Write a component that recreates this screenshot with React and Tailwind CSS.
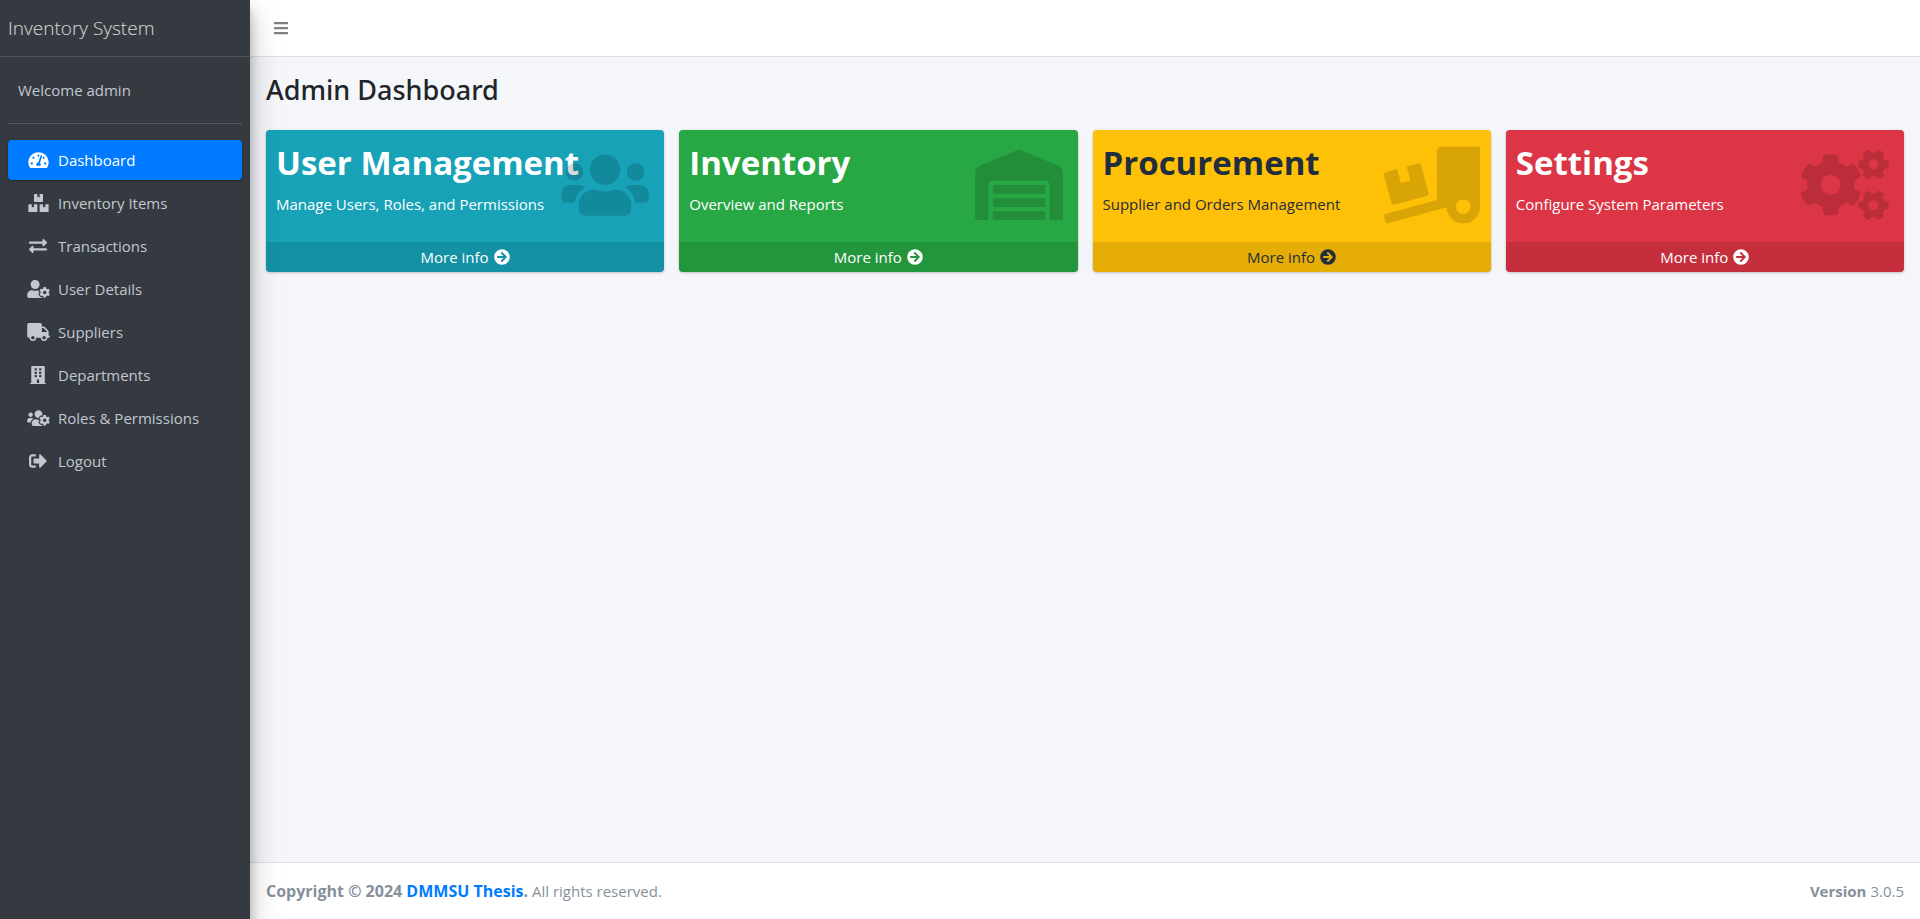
import {
  FaArrowCircleRight,
  FaBars,
  FaBoxes,
  FaBuilding,
  FaCogs,
  FaExchangeAlt,
  FaSignOutAlt,
  FaTachometerAlt,
  FaTruck,
  FaTruckLoading,
  FaUserCog,
  FaUsers,
  FaUsersCog,
  FaWarehouse,
} from 'react-icons/fa';

const navItems = [
  { label: 'Dashboard', Icon: FaTachometerAlt, width: 'w-[21px]', active: true },
  { label: 'Inventory Items', Icon: FaBoxes, width: 'w-[21px]' },
  { label: 'Transactions', Icon: FaExchangeAlt, width: 'w-[18px]' },
  { label: 'User Details', Icon: FaUserCog, width: 'w-[23px]' },
  { label: 'Suppliers', Icon: FaTruck, width: 'w-[23px]' },
  { label: 'Departments', Icon: FaBuilding, width: 'w-[16px]' },
  { label: 'Roles & Permissions', Icon: FaUsersCog, width: 'w-[23px]' },
  { label: 'Logout', Icon: FaSignOutAlt, width: 'w-[18px]' },
];

const cards = [
  {
    title: 'User Management',
    text: 'Manage Users, Roles, and Permissions',
    Icon: FaUsers,
    tone: 'bg-[#17a2b8] text-white',
    iconScale: '',
  },
  {
    title: 'Inventory',
    text: 'Overview and Reports',
    Icon: FaWarehouse,
    tone: 'bg-[#28a745] text-white',
    iconScale: '',
  },
  {
    title: 'Procurement',
    text: 'Supplier and Orders Management',
    Icon: FaTruckLoading,
    tone: 'bg-[#ffc107] text-[#1f2d3d]',
    iconScale: 'scale-110',
  },
  {
    title: 'Settings',
    text: 'Configure System Parameters',
    Icon: FaCogs,
    tone: 'bg-[#dc3545] text-white',
    iconScale: '',
  },
];

function Sidebar() {
  return (
    <aside className="z-10 w-[250px] shrink-0 bg-[#343a40] text-[#c2c7d0] shadow-[0_14px_28px_rgba(0,0,0,0.25),0_10px_10px_rgba(0,0,0,0.22)]">
      <a
        href="#home"
        className="flex h-[57px] items-center border-b border-[#4b545c] px-2 text-[19px] font-light text-white/80"
      >
        Inventory System
      </a>
      <div className="px-2">
        <div className="flex h-[67px] items-center border-b border-[#4f5962] px-[10px]">
          <a href="#profile">Welcome admin</a>
        </div>
        <nav className="mt-4">
          <ul className="flex flex-col gap-[3px]">
            {navItems.map(({ label, Icon, width, active }) => (
              <li key={label}>
                <a
                  href="#nav"
                  aria-current={active ? 'page' : undefined}
                  className={
                    active
                      ? 'flex h-10 items-center gap-1.5 rounded bg-[#007bff] px-4 text-white shadow-[0_1px_3px_rgba(0,0,0,0.12),0_1px_2px_rgba(0,0,0,0.24)]'
                      : 'flex h-10 items-center gap-1.5 rounded px-4'
                  }
                >
                  <span className="flex w-7 justify-center">
                    <Icon className={`h-[18px] ${width}`} />
                  </span>
                  {label}
                </a>
              </li>
            ))}
          </ul>
        </nav>
      </div>
    </aside>
  );
}

function Card({ title, text, Icon, tone, iconScale }) {
  return (
    <section
      className={`relative flex flex-col rounded shadow-[0_0_1px_rgba(0,0,0,0.125),0_1px_3px_rgba(0,0,0,0.2)] ${tone}`}
    >
      <div className="h-28 p-[10px]">
        <h3 className="mb-[6px] text-[33px] leading-[46px] font-bold whitespace-nowrap">{title}</h3>
        <p>{text}</p>
      </div>
      <Icon className={`absolute top-5 right-[15px] h-[70px] w-[88px] text-black/15 ${iconScale}`} />
      <a
        href="#more"
        className="flex h-[30px] items-center justify-center gap-[5px] rounded-b bg-black/10"
      >
        More info <FaArrowCircleRight className="size-4" />
      </a>
    </section>
  );
}

export default function App() {
  return (
    <div className="flex min-h-screen bg-[#f4f6f9] font-['Open_Sans','Noto_Sans',sans-serif] text-[15px] leading-6 text-[#212529]">
      <Sidebar />
      <div className="flex min-w-0 flex-1 flex-col">
        <header className="flex h-[57px] items-center border-b border-[#dee2e6] bg-white px-2">
          <button type="button" aria-label="Toggle sidebar" className="px-4 py-2 text-black/50">
            <FaBars className="h-4 w-[14px]" />
          </button>
        </header>
        <main className="flex-1 px-4 pt-[15px]">
          <h1 className="mb-[22px] font-['Noto_Sans',sans-serif] text-[27px] leading-9 font-medium">
            Admin Dashboard
          </h1>
          <div className="grid grid-cols-4 gap-[15px]">
            {cards.map((card) => (
              <Card key={card.title} {...card} />
            ))}
          </div>
        </main>
        <footer className="flex h-[57px] items-center justify-between border-t border-[#dee2e6] bg-white px-4 text-[#869099]">
          <p>
            <strong className="text-base">
              Copyright © 2024{' '}
              <a href="#thesis" className="text-[#007bff]">
                DMMSU Thesis
              </a>
              .
            </strong>{' '}
            All rights reserved.
          </p>
          <p>
            <strong>Version</strong> 3.0.5
          </p>
        </footer>
      </div>
    </div>
  );
}
